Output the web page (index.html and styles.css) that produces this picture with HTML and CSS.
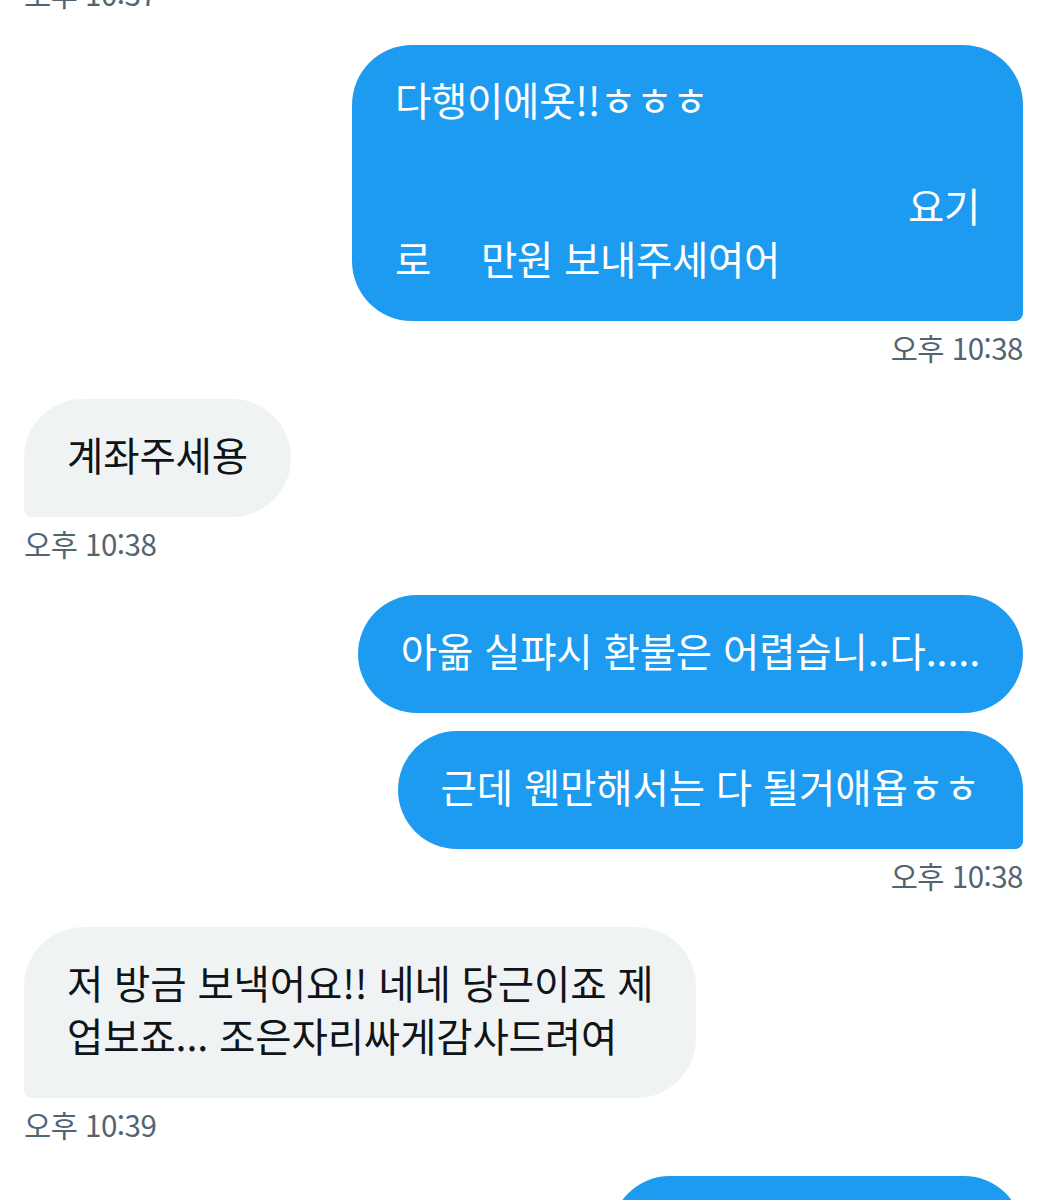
FILE: index.html
```html
<!DOCTYPE html>
<html lang="ko">
<head>
    <meta charset="UTF-8">
    <meta name="viewport" content="width=device-width, initial-scale=1.0">
    <title>메시지</title>
    <link rel="stylesheet" href="styles.css">
</head>
<body>
    <div class="thread">
        <!-- earlier message, cut off at the top -->
        <div class="group received">
            <div class="time">오후 10:37</div>
        </div>

        <div class="group sent">
            <div class="bubble last wide">
                <div class="line">다행이에욧!!ㅎㅎㅎ</div>
                <div class="line blank"></div>
                <div class="line right">요기</div>
                <div class="line"><span class="gap">로</span>만원 보내주세여어</div>
            </div>
            <div class="time">오후 10:38</div>
        </div>

        <div class="group received">
            <div class="bubble last">계좌주세용</div>
            <div class="time">오후 10:38</div>
        </div>

        <div class="group sent">
            <div class="bubble">아옮 실퍄시 환불은 어렵습니..다.....</div>
            <div class="bubble last">근데 웬만해서는 다 될거애욥ㅎㅎ</div>
            <div class="time">오후 10:38</div>
        </div>

        <div class="group received">
            <div class="bubble last">
                <div class="line">저 방금 보낵어요!! 네네 당근이죠 제</div>
                <div class="line">업보죠... 조은자리싸게감사드려여</div>
            </div>
            <div class="time">오후 10:39</div>
        </div>

        <div class="group sent">
            <div class="bubble last">입금 확인했습니다!!</div>
        </div>
    </div>
</body>
</html>
```

FILE: styles.css
```css
body {
    margin: 0;
    padding: 0;
    background-color: #fff;
    font-family: "Noto Sans CJK KR", "Noto Sans", sans-serif;
    color: #0f1419;
    overflow: hidden;
}
.thread {
    display: flex;
    flex-direction: column;
    gap: 34px;
    padding: 0 24px;
    margin-top: -15px;
}
.group {
    display: flex;
    flex-direction: column;
    gap: 18px;
}
.group.sent {
    align-items: flex-end;
}
.group.received {
    align-items: flex-start;
}
.bubble {
    max-width: 680px;
    box-sizing: border-box;
    padding: 28px 43px 37px;
    font-size: 39.5px;
    line-height: 53px;
    border-radius: 60px;
    letter-spacing: -0.15px;
    white-space: nowrap;
}
.sent .bubble {
    background-color: #1d9bf0;
    color: #fff;
}
.received .bubble {
    background-color: #eff3f4;
    color: #0f1419;
}
.sent .bubble.last {
    border-bottom-right-radius: 8px;
}
.received .bubble.last {
    border-bottom-left-radius: 8px;
}
.bubble.wide {
    width: 671px;
    padding-top: 27px;
    padding-bottom: 37px;
    letter-spacing: -0.3px;
}
.line {
    height: 53px;
}
.line.right {
    text-align: right;
}
.gap {
    margin-right: 50px;
}
.time {
    font-size: 29.5px;
    line-height: 36px;
    color: #536471;
    margin-top: -10px;
    letter-spacing: -0.5px;
}
```
